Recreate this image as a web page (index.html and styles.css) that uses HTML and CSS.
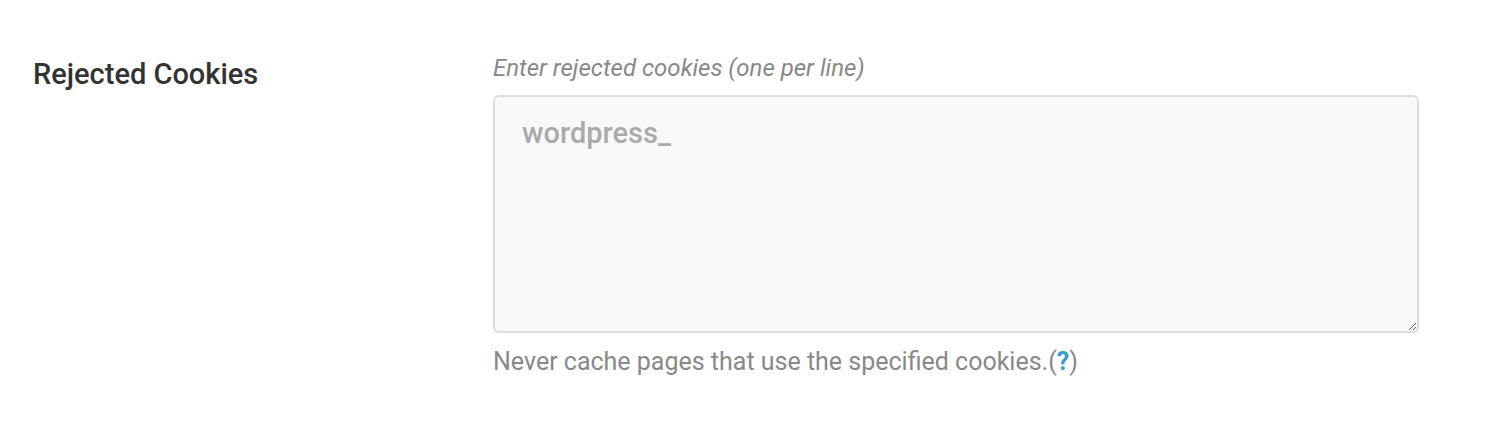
FILE: index.html
```html
<!DOCTYPE html>
<html lang="en">
<head>
    <meta charset="UTF-8" />
    <meta name="viewport" content="width=device-width, initial-scale=1.0" />
    <title>Rejected Cookies</title>
    <link rel="stylesheet" href="styles.css">
</head>
<body>
    <div class="settings-row">
        <div class="settings-row__title">Rejected Cookies</div>
        <div class="settings-row__field">
            <label for="rejected-cookies" class="field-label">Enter rejected cookies (one per line)</label>
            <textarea id="rejected-cookies" class="field-textarea" placeholder="wordpress_"></textarea>
            <p class="field-help">Never cache pages that use the specified cookies.(<a href="#" class="help-link">?</a>)</p>
        </div>
    </div>
</body>
</html>
```

FILE: styles.css
```css
/* General styles */
body {
    margin: 0;
    background: #fff;
    font-family: Roboto, "Liberation Sans", sans-serif;
}

.settings-row {
    display: flex;
    padding: 54px 0 0 33px;
}

.settings-row__title {
    width: 460px;
    font-size: 29px;
    font-weight: 500;
    color: #333;
    padding-top: 3px;
}

.settings-row__field {
    width: 926px;
}

.field-label {
    display: block;
    font-size: 24px;
    font-style: italic;
    color: #888;
    margin-bottom: 13px;
}

.field-textarea {
    display: block;
    width: 100%;
    height: 238px;
    box-sizing: border-box;
    padding: 19px 27px;
    font-family: Roboto, "Liberation Sans", sans-serif;
    font-size: 29px;
    font-weight: 500;
    background: #f9f9f9;
    border: 2px solid #ddd;
    border-radius: 6px;
    resize: vertical;
}

.field-textarea::placeholder {
    color: #aaa;
}

.field-help {
    margin: 14px 0 0;
    font-size: 25px;
    color: #888;
}

.help-link {
    color: #3a9bd5;
    font-weight: 700;
    text-decoration: none;
}
```
